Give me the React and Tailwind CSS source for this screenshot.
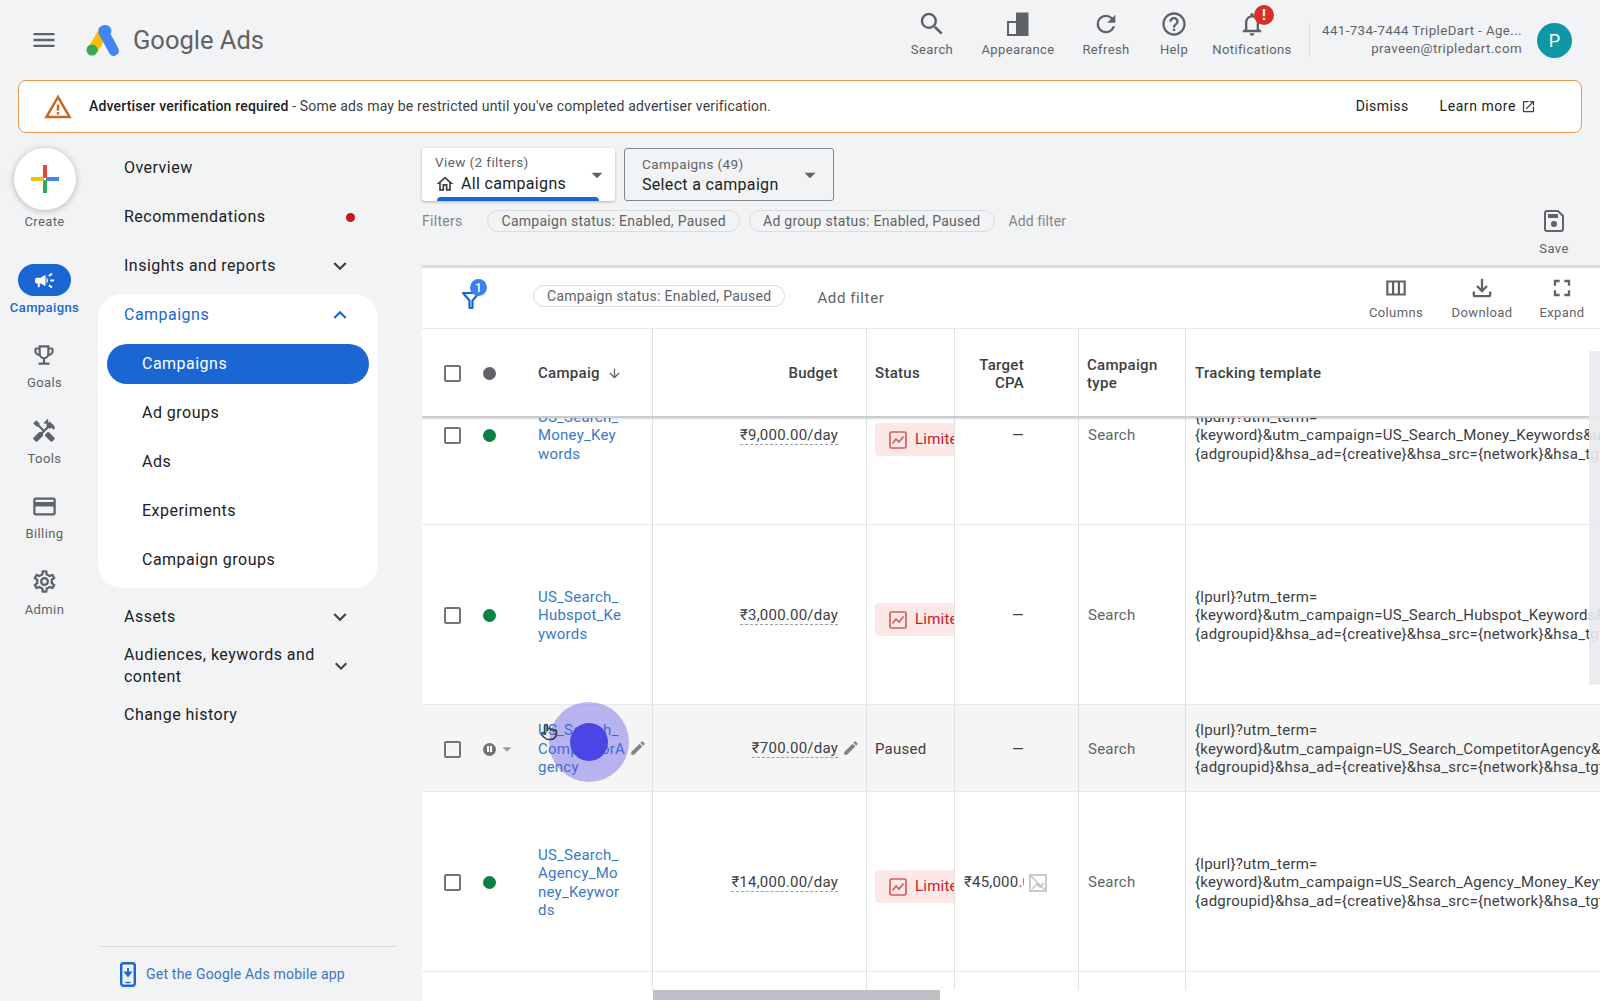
import { Pointer } from "lucide-react";
import {
  MdMenu, MdSearch, MdRefresh, MdHelpOutline, MdOutlineNotifications, MdOpenInNew, MdExpandMore, MdExpandLess,
  MdCampaign, MdOutlineEmojiEvents, MdHandyman, MdOutlineCreditCard, MdOutlineSettings, MdEdit, MdArrowDownward,
  MdOutlineFileDownload, MdWarningAmber, MdOutlineViewColumn, MdFullscreen, MdArrowDropDown, MdOutlineHome,
} from "react-icons/md";

const HEADER_ACTIONS = [
  { label: "Search", icon: <MdSearch size={30} />, w: "w-[60px]" },
  { label: "Appearance", icon: <AppearanceIcon />, w: "w-[112px]" },
  { label: "Refresh", icon: <MdRefresh size={28} />, w: "w-[64px]" },
  { label: "Help", icon: <MdHelpOutline size={28} />, w: "w-[72px]" },
  { label: "Notifications", icon: <MdOutlineNotifications size={28} />, w: "w-[84px]", badge: true },
];

const RAIL = [
  { label: "Goals", icon: <MdOutlineEmojiEvents size={26} /> },
  { label: "Tools", icon: <MdHandyman size={26} /> },
  { label: "Billing", icon: <MdOutlineCreditCard size={27} /> },
  { label: "Admin", icon: <MdOutlineSettings size={27} /> },
];

const ROWS = [
  {
    h: "h-[180px]", dot: "on", name: ["US_Search_", "Money_Key", "words"], budget: "₹9,000.00/day", limited: true, cpa: "—",
    track: "{keyword}&utm_campaign=US_Search_Money_Keywords&utm_source=adwords",
  },
  {
    h: "h-[180px]", dot: "on", name: ["US_Search_", "Hubspot_Ke", "ywords"], budget: "₹3,000.00/day", limited: true, cpa: "—",
    track: "{keyword}&utm_campaign=US_Search_Hubspot_Keywords&utm_source=adwords",
  },
  {
    h: "h-[87px]", dot: "paused", name: ["US_Search_", "CompetitorA", "gency"], budget: "₹700.00/day", limited: false, cpa: "—", hover: true,
    track: "{keyword}&utm_campaign=US_Search_CompetitorAgency&utm_source=adwords",
  },
  {
    h: "h-[180px]", dot: "on", name: ["US_Search_", "Agency_Mo", "ney_Keywor", "ds"], budget: "₹14,000.00/day", limited: true, cpa: "₹45,000.00",
    track: "{keyword}&utm_campaign=US_Search_Agency_Money_Keywords&utm_source=adwords",
  },
];

const COLS = "grid grid-cols-[231px_214px_88px_124px_107px_1fr]";

function AppearanceIcon() {
  return (
    <svg width="24" height="26" viewBox="0 0 24 26" fill="none">
      <path d="M2 11h9v13H2z" stroke="#5f6368" strokeWidth="2" />
      <path d="M10 1.500h12.500V25H10z" fill="#5f6368" />
      <path d="M3 12h7v11H3z" fill="#f1f3f4" />
    </svg>
  );
}

function GoogleAdsLogo() {
  return (
    <svg width="34" height="32" viewBox="0 0 34 32">
      <path d="M12.5 6 2 24l9 5L22 10z" fill="#fbbc04" />
      <path d="M12.6 4.6c2.4-3.6 7-4.5 10-2.6 2.9 1.8 3.6 5 2 8l7.6 14.300c1.600 3 .5 5.700-2.200 7-2.700 1.300-5.300.4-6.800-2.300L12.500 9.500z" fill="#4285f4" />
      <circle cx="6" cy="26" r="5.500" fill="#34a853" />
    </svg>
  );
}

function PlusIcon() {
  return (
    <svg width="28" height="28" viewBox="0 0 28 28">
      <rect x="12" y="0" width="4" height="13" fill="#ea4335" />
      <rect x="15" y="12" width="13" height="4" fill="#4285f4" />
      <rect x="12" y="15" width="4" height="13" fill="#34a853" />
      <rect x="0" y="12" width="13" height="4" fill="#fbbc04" />
    </svg>
  );
}

function SaveIcon() {
  return (
    <svg width="22" height="24" viewBox="0 0 22 24" fill="none">
      <path d="M2 4a2 2 0 0 1 2-2h11l5 5v13a2 2 0 0 1-2 2H4a2 2 0 0 1-2-2z" stroke="#5f6368" strokeWidth="2" />
      <rect x="5" y="5" width="10" height="4" fill="#5f6368" />
      <circle cx="11" cy="15" r="3" fill="#5f6368" />
    </svg>
  );
}

function FunnelIcon() {
  return (
    <svg width="20" height="22" viewBox="0 0 20 22" fill="none">
      <path d="M2 5h16l-6.500 7.500V20H8.500v-7.500z" stroke="#1a66d2" strokeWidth="2.200" strokeLinejoin="round" />
    </svg>
  );
}

function LimitedChartIcon() {
  return (
    <svg width="18" height="18" viewBox="0 0 18 18" fill="none">
      <rect x="1" y="1" width="16" height="16" rx="1.500" stroke="#d0605a" strokeWidth="1.700" />
      <path d="M3.500 12.500 7 8l3 3 4.500-5.500" stroke="#d0605a" strokeWidth="1.700" />
    </svg>
  );
}

function NoImageIcon() {
  return (
    <svg width="20" height="20" viewBox="0 0 20 20" fill="none" className="shrink-0">
      <rect x="2" y="2" width="16" height="16" stroke="#c4c7ca" strokeWidth="1.800" />
      <path d="M1 1l18 18M4 16l5-5 3 3 4-4" stroke="#c4c7ca" strokeWidth="1.600" />
    </svg>
  );
}

function PhoneDownloadIcon() {
  return (
    <svg width="16" height="25" viewBox="0 0 16 25" fill="none">
      <rect x="1.200" y="1.200" width="13.600" height="22.600" rx="2.500" stroke="#1a66d2" strokeWidth="2.400" />
      <path d="M8 6v7M5.300 10.500 8 14l2.700-3.500z" stroke="#1a66d2" strokeWidth="1.800" fill="#1a66d2" />
      <path d="M5.500 20.500h5" stroke="#1a66d2" strokeWidth="1.500" />
    </svg>
  );
}

function PausedIcon() {
  return (
    <div className="flex items-center">
      <span className="flex h-[13px] w-[13px] items-center justify-center gap-[1.500px] rounded-full bg-[#70757a]">
        <span className="h-[6px] w-[1.500px] bg-white" />
        <span className="h-[6px] w-[1.500px] bg-white" />
      </span>
      <MdArrowDropDown size={22} className="text-[#9aa0a6]" />
    </div>
  );
}

function Checkbox() {
  return <span className="h-[17px] w-[17px] shrink-0 rounded-[2px] border-2 border-[#70757a]" />;
}

function Chip({ children }) {
  return (
    <span className="flex h-[22px] items-center whitespace-nowrap rounded-full border border-[#dadce0] px-[13px] text-[14px] tracking-[0.02em] text-[#5f6368]">
      {children}
    </span>
  );
}

function NavRow({ children, right, active }) {
  return (
    <div className={`flex h-[49px] items-center justify-between pl-[26px] pr-[25px] text-[16px] tracking-[0.03em] ${active ? "text-[#1a66d2]" : "text-[#202124]"}`}>
      <span>{children}</span>
      {right}
    </div>
  );
}

function Header() {
  return (
    <div className="flex h-[80px] shrink-0 items-center">
      <MdMenu size={28} className="ml-[30px] text-[#5f6368]" />
      <div className="ml-[28px]"><GoogleAdsLogo /></div>
      <span className="ml-[13px] text-[25.500px] text-[#5f6368]">Google Ads</span>
      <div className="ml-auto flex h-full items-start">
        {HEADER_ACTIONS.map((a) => (
          <div key={a.label} className={`relative flex flex-col items-center pt-[10px] text-[#5f6368] ${a.w}`}>
            <div className="flex h-[28px] items-center">{a.icon}</div>
            <span className="mt-[4px] text-[13px] leading-[16px] tracking-[0.03em]">{a.label}</span>
            {a.badge && (
              <span className="absolute left-[44px] top-[5px] flex h-[20px] w-[20px] items-center justify-center rounded-full bg-[#d93025] text-[14px] font-bold text-white">!</span>
            )}
          </div>
        ))}
      </div>
      <div className="ml-[15px] h-[34px] w-px bg-[#dadce0]" />
      <div className="w-[212px] text-right text-[13.300px] leading-[18px] tracking-[0.03em] text-[#5f6368]">
        <div>441-734-7444 TripleDart - Age...</div>
        <div>praveen@tripledart.com</div>
      </div>
      <div className="ml-[15px] mr-[28px] flex h-[35px] w-[35px] items-center justify-center rounded-full bg-[#0f97a7] text-[18px] text-white">P</div>
    </div>
  );
}

function Banner() {
  return (
    <div className="mx-[18px] flex h-[53px] shrink-0 items-center rounded-lg border border-[#e8994f] bg-white text-[14px] text-[#3c4043]">
      <MdWarningAmber size={30} className="ml-[24px] text-[#c26a24]" />
      <span className="ml-[16px] tracking-[0.013em]">
        <span className="font-medium text-[#202124]">Advertiser verification required</span> - Some ads may be restricted until you've completed advertiser verification.
      </span>
      <span className="ml-auto text-[#202124] tracking-[0.03em]">Dismiss</span>
      <span className="ml-[31px] text-[#202124] tracking-[0.04em]">Learn more</span>
      <MdOpenInNew size={15} className="ml-[5px] mr-[45px] text-[#3c4043]" />
    </div>
  );
}

function Rail() {
  return (
    <div className="flex w-[89px] shrink-0 flex-col items-center pt-[15px]">
      <div className="flex h-[62px] w-[62px] items-center justify-center rounded-full bg-white shadow-[0_1px_6px_rgba(60,64,67,0.35)]">
        <PlusIcon />
      </div>
      <span className="mt-[4px] text-[13px] leading-[16px] tracking-[0.03em] text-[#5f6368]">Create</span>
      <div className="mt-[34px] flex h-[32px] w-[53px] items-center justify-center rounded-full bg-[#1a66d2] text-white">
        <MdCampaign size={23} />
      </div>
      <span className="mt-[4px] text-[13px] font-medium leading-[16px] tracking-[0.03em] text-[#1a66d2]">Campaigns</span>
      <div className="mt-[27px]">
        {RAIL.map((r) => (
          <div key={r.label} className="flex h-[75.500px] flex-col items-center text-[#5f6368]">
            <div className="flex h-[24px] items-center">{r.icon}</div>
            <span className="mt-[8px] text-[13px] leading-[16px] tracking-[0.03em]">{r.label}</span>
          </div>
        ))}
      </div>
    </div>
  );
}

function SideNav() {
  const down = <MdExpandMore size={26} className="text-[#3c4043]" />;
  return (
    <div className="ml-[9px] flex w-[298px] shrink-0 flex-col pt-[10.500px]">
      <div className="w-[280px]">
        <NavRow>Overview</NavRow>
        <NavRow right={<span className="-mr-[2px] h-[9px] w-[9px] rounded-full bg-[#c5161d]" />}>Recommendations</NavRow>
        <NavRow right={down}>Insights and reports</NavRow>
        <div className="mt-[3.500px] rounded-[24px] bg-white pb-[3.500px]">
          <div className="flex h-[45.500px] items-end justify-between pb-[13px] pl-[26px] pr-[25px] text-[16px] tracking-[0.03em] text-[#1a66d2]">
            <span>Campaigns</span>
            <MdExpandLess size={26} className="-mb-[1px]" />
          </div>
          <div className="flex h-[49px] items-center px-[9px]">
            <div className="flex h-[40px] w-full items-center rounded-full bg-[#1a66d2] pl-[35px] text-[16px] tracking-[0.03em] text-white">Campaigns</div>
          </div>
          {["Ad groups", "Ads", "Experiments", "Campaign groups"].map((t) => (
            <div key={t} className="flex h-[49px] items-center pl-[44px] text-[16px] tracking-[0.03em] text-[#202124]">{t}</div>
          ))}
        </div>
        <div className="mt-[4.500px]">
          <NavRow right={down}>Assets</NavRow>
          <NavRow right={down}><span className="block w-[205px] leading-[22px]">Audiences, keywords and content</span></NavRow>
          <NavRow>Change history</NavRow>
        </div>
      </div>
      <div className="mt-auto flex h-[55px] items-center border-t border-[#dadce0] pl-[22px]">
        <PhoneDownloadIcon />
        <span className="ml-[10px] text-[14px] tracking-[0.015em] text-[#3b72c4]">Get the Google Ads mobile app</span>
      </div>
    </div>
  );
}

function Toolbar() {
  return (
    <>
      <div className="flex h-[53px] shrink-0 gap-[9px]">
        <div className="relative w-[193px] rounded-[3px] bg-white shadow-[0_1px_3px_rgba(60,64,67,0.35)]">
          <div className="pl-[13px] pt-[5px] text-[13.500px] leading-[18px] tracking-[0.03em] text-[#5f6368]">View (2 filters)</div>
          <div className="mt-[2px] flex items-center pl-[13px] text-[16px] leading-[22px] tracking-[0.02em] text-[#202124]">
            <MdOutlineHome size={20} className="mr-[6px] text-[#3c4043]" />All campaigns
          </div>
          <MdArrowDropDown size={26} className="absolute right-[5px] top-[14px] text-[#5f6368]" />
          <div className="absolute bottom-0 left-[15px] h-[4px] w-[162px] rounded-t-[4px] bg-[#1a66d2]" />
        </div>
        <div className="relative w-[210px] rounded-[3px] border border-[#80868b]">
          <div className="pl-[17px] pt-[6px] text-[13.500px] leading-[18px] tracking-[0.03em] text-[#5f6368]">Campaigns (49)</div>
          <div className="mt-[1px] pl-[17px] text-[16px] leading-[22px] tracking-[0.02em] text-[#202124]">Select a campaign</div>
          <MdArrowDropDown size={26} className="absolute right-[10px] top-[13px] text-[#5f6368]" />
        </div>
      </div>
      <div className="mt-[9px] flex h-[55px] shrink-0 items-start">
        <div className="flex h-[22px] items-center text-[14px] tracking-[0.02em] text-[#80868b]">
          <span className="mr-[25px]">Filters</span>
          <Chip>Campaign status: Enabled, Paused</Chip>
          <span className="w-[9px]" />
          <Chip>Ad group status: Enabled, Paused</Chip>
          <span className="ml-[14px] tracking-[0.005em]">Add filter</span>
        </div>
        <div className="ml-auto -mt-[1px] flex w-[92px] flex-col items-center">
          <SaveIcon />
          <span className="mt-[8px] text-[13px] leading-[16px] tracking-[0.03em] text-[#5f6368]">Save</span>
        </div>
      </div>
    </>
  );
}

function TableTool({ label, icon, w }) {
  return (
    <div className={`flex flex-col items-center text-[#5f6368] ${w}`}>
      <div className="flex h-[28px] items-center">{icon}</div>
      <span className="mt-[3px] text-[13px] leading-[16px] tracking-[0.03em]">{label}</span>
    </div>
  );
}

function CardToolbar() {
  return (
    <div className="flex h-[61px] shrink-0 items-center border-b border-[#e8eaed]">
      <div className="relative ml-[39px] mt-[2px]">
        <FunnelIcon />
        <span className="absolute -top-[9px] left-[9px] flex h-[17px] w-[17px] items-center justify-center rounded-full bg-[#3b82e6] text-[12px] font-medium text-white">1</span>
      </div>
      <div className="ml-[52px] -mt-[4px]"><Chip>Campaign status: Enabled, Paused</Chip></div>
      <span className="ml-[32px] text-[15px] tracking-[0.04em] text-[#5f6368]">Add filter</span>
      <div className="ml-auto -mt-[2px] flex">
        <TableTool label="Columns" w="w-[88px]" icon={<MdOutlineViewColumn size={26} />} />
        <TableTool label="Download" w="w-[84px]" icon={<MdOutlineFileDownload size={28} />} />
        <TableTool label="Expand" w="w-[76px]" icon={<MdFullscreen size={28} />} />
      </div>
    </div>
  );
}

function TableHeader() {
  const cell = "flex items-center border-r border-[#e0e0e0] pt-[2px] text-[15px] font-medium tracking-[0.02em] text-[#3c4043]";
  return (
    <div className={`${COLS} relative z-10 h-[89px] border-b-2 border-[#c9cbce] bg-white shadow-[0_1px_2px_rgba(60,64,67,0.2)]`}>
      <div className={`${cell} pl-[22px]`}>
        <Checkbox />
        <span className="ml-[22px] h-[13px] w-[13px] rounded-full bg-[#5f6368]" />
        <span className="ml-[42px]">Campaig</span>
        <MdArrowDownward size={15} className="ml-[7px] text-[#5f6368]" />
      </div>
      <div className={`${cell} justify-end pr-[28px]`}>Budget</div>
      <div className={`${cell} pl-[8px]`}>Status</div>
      <div className={`${cell} justify-end pr-[54px] text-right leading-[18px]`}>Target<br />CPA</div>
      <div className={`${cell} pl-[8px] leading-[18px]`}>Campaign<br />type</div>
      <div className="flex items-center pl-[9px] pt-[2px] text-[15px] font-medium tracking-[0.02em] text-[#3c4043]">Tracking template</div>
    </div>
  );
}

function Row({ row }) {
  const cell = "relative flex items-center overflow-hidden border-r border-[#e0e0e0] pt-[2px] text-[15px] leading-[18.400px] tracking-[0.015em] text-[#3c4043]";
  return (
    <div className={`${COLS} ${row.h} border-b border-[#e8eaed] ${row.hover ? "bg-[#f5f5f5]" : "bg-white"}`}>
      <div className={`${cell} pl-[22px]`}>
        <Checkbox />
        <div className="ml-[22px] w-[55px] shrink-0">
          {row.dot === "on" ? <span className="block h-[13px] w-[13px] rounded-full bg-[#0b8043]" /> : <PausedIcon />}
        </div>
        <div className="whitespace-nowrap text-[#3b78c9]">
          {row.name.map((l) => <div key={l}>{l}</div>)}
        </div>
        {row.hover && <MdEdit size={18} className="absolute left-[207px] top-[34px] text-[#80868b]" />}
      </div>
      <div className={`${cell} justify-end pr-[28px]`}>
        <span className="border-b border-dashed border-[#9aa0a6] leading-[17px]">{row.budget}</span>
        {row.hover && <MdEdit size={18} className="absolute left-[189px] top-[34px] text-[#80868b]" />}
      </div>
      <div className={`${cell} pl-[8px]`}>
        {row.limited ? (
          <div className="mt-[8px] flex h-[33px] w-[100px] shrink-0 items-center rounded-[4px] bg-[#fce8e6] pl-[14px] text-[#c5221f]">
            <LimitedChartIcon />
            <span className="ml-[8px] text-[15px]">Limited</span>
          </div>
        ) : "Paused"}
      </div>
      <div className={`${cell} pl-[9px]`}>
        <span className="w-[60px] overflow-hidden whitespace-nowrap text-right">{row.cpa}</span>
        {row.cpa !== "—" && <span className="ml-[4px]"><NoImageIcon /></span>}
      </div>
      <div className={`${cell} pl-[9px] text-[#5f6368]`}>Search</div>
      <div className="flex flex-col justify-center overflow-hidden whitespace-nowrap pl-[9px] pt-[2px] text-[15px] leading-[18.400px] tracking-[0.015em] text-[#3c4043]">
        <div>{"{lpurl}?utm_term="}</div>
        <div>{row.track}</div>
        <div>{"{adgroupid}&hsa_ad={creative}&hsa_src={network}&hsa_tgt={targetid}"}</div>
      </div>
    </div>
  );
}

function Table() {
  return (
    <div className="relative flex min-h-0 flex-1 flex-col overflow-hidden">
      <TableHeader />
      <div className="-mt-[73px]">
        {ROWS.map((r) => <Row key={r.name.join("")} row={r} />)}
        <div className={`${COLS} h-[18px]`}>
          <div className="border-r border-[#e0e0e0]" />
          <div className="border-r border-[#e0e0e0]" />
          <div className="border-r border-[#e0e0e0]" />
          <div className="border-r border-[#e0e0e0]" />
          <div className="border-r border-[#e0e0e0]" />
        </div>
      </div>
      {/* overlay scrollbars and the recorded click marker */}
      <div className="absolute bottom-0 left-0 z-20 h-[11px] w-full bg-white">
        <div className="ml-[231px] h-[10px] w-[287px] bg-[#bdc1c6]" />
      </div>
      <div className="absolute right-0 top-[22px] z-20 h-[334px] w-[11px] bg-[#e8eaed]/90" />
      <div className="absolute left-[127px] top-[373px] z-20 flex h-[80px] w-[80px] items-center justify-center rounded-full bg-[#5a50e6]/40">
        <div className="h-[38px] w-[38px] rounded-full bg-[#4c44e4]" />
      </div>
      <Pointer size={18} className="absolute left-[118px] top-[394px] z-30 text-[#3c4043]" />
    </div>
  );
}

export default function App() {
  return (
    <div className="flex h-[1001px] w-[1600px] flex-col overflow-hidden bg-[#f1f3f4] font-['Roboto',sans-serif]">
      <Header />
      <Banner />
      <div className="flex min-h-0 flex-1">
        <Rail />
        <SideNav />
        <div className="relative ml-[26px] flex min-w-0 flex-1 flex-col pt-[15px]">
          <Toolbar />
          <div className="flex min-h-0 flex-1 flex-col border-t-[3px] border-[#dadce0] bg-white">
            <CardToolbar />
            <Table />
          </div>
        </div>
      </div>
    </div>
  );
}
